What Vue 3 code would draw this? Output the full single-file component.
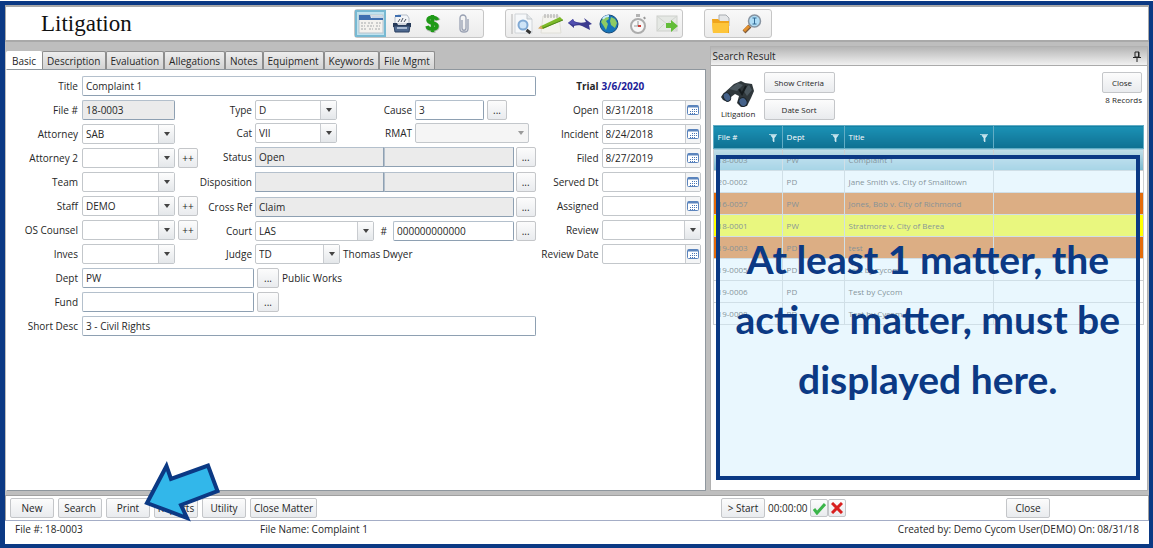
<script setup>
import { ref } from 'vue'

const tabs = ['Basic', 'Description', 'Evaluation', 'Allegations', 'Notes', 'Equipment', 'Keywords', 'File Mgmt']
const activeTab = ref('Basic')

const staff = [
  { id: 'attorney', label: 'Attorney', value: 'SAB' },
  { id: 'attorney2', label: 'Attorney 2', value: '', more: true },
  { id: 'team', label: 'Team', value: '' },
  { id: 'staff', label: 'Staff', value: 'DEMO', more: true },
  { id: 'counsel', label: 'OS Counsel', value: '', more: true },
  { id: 'inves', label: 'Inves', value: '' },
]

const dates = [
  { id: 'open', label: 'Open', value: '8/31/2018' },
  { id: 'incident', label: 'Incident', value: '8/24/2018' },
  { id: 'filed', label: 'Filed', value: '8/27/2019' },
  { id: 'served', label: 'Served Dt', value: '' },
  { id: 'assigned', label: 'Assigned', value: '' },
  { id: 'review', label: 'Review', value: '', list: true },
  { id: 'reviewdate', label: 'Review Date', value: '' },
]

const matters = [
  { file: '18-0003', dept: 'PW', title: 'Complaint 1', tone: 'selected' },
  { file: '20-0002', dept: 'PD', title: 'Jane Smith vs. City of Smalltown', tone: '' },
  { file: '16-0057', dept: 'PW', title: 'Jones, Bob v. City of Richmond', tone: 'orange' },
  { file: '18-0001', dept: 'PW', title: 'Stratmore v. City of Berea', tone: 'yellow' },
  { file: '19-0003', dept: 'PD', title: 'test', tone: 'orange' },
  { file: '19-0005', dept: 'PD', title: 'test by cycom', tone: '' },
  { file: '19-0006', dept: 'PD', title: 'Test by Cycom', tone: '' },
  { file: '19-0008', dept: 'PD', title: 'Test by Cycom', tone: '' },
]
</script>

<template>
  <div class="window">
    <header class="top">
      <h1>Litigation</h1>
      <div class="tools">
        <button class="tool on" aria-label="Matter form">
          <svg width="26" height="20" viewBox="0 0 26 20">
            <rect x="1" y="1" width="24" height="18" fill="#f4f2ee" stroke="#b9c3cc" />
            <path d="M1 1h11l1 3h12v2H1z" fill="#3f6fb0" />
            <path d="M13 2h12v2H14z" fill="#c7d6e8" />
            <path d="M3 9h5M10 9h6M18 9h5M3 12h4M9 12h7M18 12h4M3 15h6M11 15h4M17 15h6" stroke="#a5a8aa" stroke-dasharray="2 1" />
          </svg>
        </button>
        <button class="tool" aria-label="Card file">
          <svg width="20" height="20" viewBox="0 0 20 20">
            <path d="M3 10V3l3-2h9l2 3v6z" fill="#f2f4f7" stroke="#b4bcc8" />
            <path d="M3 2h6" stroke="#3f6fb0" stroke-width="2" />
            <path d="M6 8l2-3M9 8l2-4M12 8l2-3" stroke="#4b5361" />
            <path d="M1 9h4l1 2h8l1-2h4v4H1z" fill="#263a59" />
            <path d="M2 12h16l-1 6H3z" fill="#4d688f" stroke="#2c4161" />
            <path d="M5 14h10" stroke="#a9bbd3" stroke-width="2" />
          </svg>
        </button>
        <button class="tool" aria-label="Finance">
          <svg width="18" height="20" viewBox="0 0 18 20">
            <path d="M14.500 6.500c-1-3-10-4-10 0 0 4 9 2 9 6 0 4-9 4-10 1M9.500 2v17" fill="none" stroke="#b5bbb5" stroke-width="4" />
            <path d="M13.500 6c-1-3-9.500-4-9.500 0 0 4 9 2 9 6 0 4-9 4-10 0M8.500 1v17" fill="none" stroke="#1f9a17" stroke-width="3.500" />
          </svg>
        </button>
        <button class="tool" aria-label="Attachments">
          <svg width="12" height="20" viewBox="0 0 12 20">
            <path d="M4 6v8c0 3 4 3 4 0V4c0-4-6-4-6 0v11c0 4 8 4 8 0V5" fill="none" stroke="#98a0b2" stroke-width="1.300" />
          </svg>
        </button>
      </div>
      <div class="tools wide">
        <button class="tool" aria-label="Document search">
          <svg width="22" height="22" viewBox="0 0 22 22">
            <path d="M1 1v20" stroke="#b4b4b4" />
            <path d="M4 1h12l5 5v14H4z" fill="#f6f8fa" stroke="#d0d4d8" />
            <path d="M16 1v5h5" fill="#e3e7ea" stroke="#c1c6ca" />
            <circle cx="12" cy="12" r="4.500" fill="#cfe4f7" stroke="#80a9d4" stroke-width="2" />
            <path d="M15.500 17l4 3" stroke="#333" stroke-width="3" />
          </svg>
        </button>
        <button class="tool" aria-label="Notepad">
          <svg width="26" height="22" viewBox="0 0 26 22">
            <path d="M5 3h16l2 17H3z" fill="#f4f3ee" stroke="#e0dfd8" />
            <path d="M7 1v4M10 1v4M13 1v4M16 1v4M19 1v4" stroke="#a5a5a5" />
            <path d="M3 13L22 4l3 3L5 16l-4-1z" fill="#7db928" />
            <path d="M4 15.500L25 7" stroke="#4f8717" />
            <path d="M0 15.500l3-3 2 3.500z" fill="#d9a866" />
          </svg>
        </button>
        <button class="tool" aria-label="Routing">
          <svg width="26" height="16" viewBox="0 0 26 16">
            <path d="M1 7l5-4 1 2c4 2 8 2 12 1l-2-4 8 6-3 1 1 5-6-3c-3-2-7-2-10-1v2z" fill="#3b3a8f" />
            <path d="M1 7l5-4 1 3 5 1-5 2z" fill="#514fb0" />
          </svg>
        </button>
        <button class="tool" aria-label="Web">
          <svg width="20" height="20" viewBox="0 0 20 20">
            <circle cx="10" cy="10" r="9" fill="#1673b8" stroke="#174a78" />
            <path d="M4 4l5-2 1 3-3 2 2 3-2 6-3-5-2-3zM12 3l4 2 2 4-2 5-4-3-1-4z" fill="#8ecb63" />
            <path d="M4 5c1-2 4-3 6-3" stroke="#c8edff" stroke-width="2" fill="none" />
          </svg>
        </button>
        <button class="tool" aria-label="Timer">
          <svg width="18" height="22" viewBox="0 0 18 22">
            <path d="M7 1h4v3H7z" fill="#b3b3b3" />
            <path d="M15 4l1 2" stroke="#999" stroke-width="2" />
            <circle cx="9" cy="13" r="7" fill="#f7f7f7" stroke="#acacac" stroke-width="2" />
            <path d="M9 13V8M5 13h4" stroke="#999" />
            <path d="M9 13h3" stroke="#cf3b33" stroke-width="2" />
          </svg>
        </button>
        <button class="tool" aria-label="Send mail">
          <svg width="22" height="18" viewBox="0 0 22 18">
            <rect x="1" y="1" width="20" height="15" fill="#e5e8e4" stroke="#cdd0cc" />
            <path d="M1 1l10 8L21 1M1 16l7-7M21 16l-6-7" fill="none" stroke="#d0d3cf" />
            <path d="M10 8h5V5l7 6-7 6v-4h-5z" fill="#62bd38" />
          </svg>
        </button>
      </div>
      <div class="tools">
        <button class="tool" aria-label="Folder">
          <svg width="20" height="20" viewBox="0 0 20 20">
            <path d="M8 1h7l3 3v8H8z" fill="#e4e6e8" stroke="#a8acb0" />
            <path d="M1 5h6l2 2h9v12H2z" fill="#f0a51c" />
            <path d="M1 9h17l-1 10H2z" fill="#fdc53a" />
          </svg>
        </button>
        <button class="tool" aria-label="Find">
          <svg width="20" height="20" viewBox="0 0 20 20">
            <path d="M8 12l-6 6" stroke="#7c5a3c" stroke-width="4" />
            <path d="M7 12l-5 5" stroke="#e2902f" stroke-width="3" />
            <circle cx="12.500" cy="7" r="6" fill="#aedcf5" stroke="#8793a0" stroke-width="1.500" />
            <path d="M10.500 4h4M12.500 4v6M10.500 10h4" stroke="#336a94" />
          </svg>
        </button>
      </div>
    </header>

    <main class="body">
      <section class="matter">
        <nav class="tabs" role="tablist">
          <button v-for="t in tabs" :key="t" role="tab" :class="{ active: t === activeTab }" :aria-selected="t === activeTab" @click="activeTab = t">{{ t }}</button>
        </nav>
        <div class="form">
          <div class="main">
            <div class="field"><label for="title">Title</label><input id="title" class="box grow" value="Complaint 1" /></div>
            <div class="split">
              <div class="left">
                <div class="field"><label for="file">File #</label><input id="file" class="box std" value="18-0003" readonly /></div>
                <div v-for="f in staff" :key="f.id" class="field">
                  <label :for="f.id">{{ f.label }}</label>
                  <span class="combo std"><select :id="f.id"><option>{{ f.value }}</option></select></span>
                  <button v-if="f.more" class="btn plus" :aria-label="'More ' + f.label">++</button>
                </div>
              </div>
              <div class="middle">
                <div class="field">
                  <label for="type">Type</label>
                  <span class="combo short"><select id="type"><option>D</option></select></span>
                  <label class="second" for="cause">Cause</label>
                  <input id="cause" class="box cause" value="3" />
                  <button class="btn dots" aria-label="Choose cause">...</button>
                </div>
                <div class="field">
                  <label for="cat">Cat</label>
                  <span class="combo short"><select id="cat"><option>VII</option></select></span>
                  <label class="second" for="rmat">RMAT</label>
                  <span class="combo off"><select id="rmat" disabled><option></option></select></span>
                </div>
                <div class="field tall">
                  <label for="status">Status</label>
                  <span class="pair"><input id="status" class="box" value="Open" readonly /><input class="box" aria-label="Status detail" readonly /></span>
                  <button class="btn dots" aria-label="Choose status">...</button>
                </div>
                <div class="field tall">
                  <label for="disposition">Disposition</label>
                  <span class="pair"><input id="disposition" class="box" readonly /><input class="box" aria-label="Disposition detail" readonly /></span>
                  <button class="btn dots" aria-label="Choose disposition">...</button>
                </div>
                <div class="field tall">
                  <label for="crossref">Cross Ref</label>
                  <input id="crossref" class="box grow" value="Claim" readonly />
                  <button class="btn dots" aria-label="Choose cross reference">...</button>
                </div>
                <div class="field">
                  <label for="court">Court</label>
                  <span class="combo court"><select id="court"><option>LAS</option></select></span>
                  <label class="hash" for="courtno">#</label>
                  <input id="courtno" class="box grow" value="000000000000" />
                  <button class="btn dots" aria-label="Choose court number">...</button>
                </div>
                <div class="field">
                  <label for="judge">Judge</label>
                  <span class="combo judge"><select id="judge"><option>TD</option></select></span>
                  <span class="note">Thomas Dwyer</span>
                </div>
              </div>
            </div>
            <div class="field"><label for="dept">Dept</label><input id="dept" class="box long" value="PW" /><button class="btn dots" aria-label="Choose department">...</button><span class="note">Public Works</span></div>
            <div class="field"><label for="fund">Fund</label><input id="fund" class="box long" /><button class="btn dots" aria-label="Choose fund">...</button></div>
            <div class="field"><label for="desc">Short Desc</label><input id="desc" class="box grow" value="3 - Civil Rights" /></div>
          </div>
          <div class="dates">
            <div class="field trial"><span class="name">Trial</span><span class="when">3/6/2020</span></div>
            <div v-for="d in dates" :key="d.id" class="field">
              <label :for="d.id">{{ d.label }}</label>
              <span v-if="d.list" class="combo grow"><select :id="d.id"><option></option></select></span>
              <span v-else class="date">
                <input :id="d.id" :value="d.value" />
                <button :aria-label="'Pick ' + d.label">
                  <svg width="12" height="12" viewBox="0 0 12 12">
                    <rect x=".5" y="1.500" width="11" height="9" rx="1" fill="#fff" stroke="#5b84bd" />
                    <path d="M1 2.500h10" stroke="#5b84bd" stroke-width="2" />
                    <path d="M5 5.500h1M7 5.500h1M9 5.500h1M3 7.500h1M5 7.500h1M7 7.500h1M9 7.500h1M3 9.500h1M5 9.500h1M7 9.500h1" stroke="#4b77b5" />
                  </svg>
                </button>
              </span>
            </div>
          </div>
        </div>
      </section>

      <aside class="results">
        <div class="caption">
          <h2>Search Result</h2>
          <svg width="8" height="11" viewBox="0 0 8 11"><path d="M2 1h4v5H2zM0 6.500h8M4 7v4M5.500 1v5" fill="none" stroke="#222" /></svg>
        </div>
        <div class="actions">
          <div class="kind">
            <svg width="34" height="28" viewBox="0 0 34 28">
              <path d="M2 14L13 4l7-3 4 2 7 1 2 7-3 7-4 8-6 1-4-4 2-7-4-2-4 3-3 5-5-2-2-3z" fill="#2f373b" />
              <path d="M8 9l9-6 5 2-6 6zM22 10l6-5 3 5-5 6z" fill="#4b575e" />
              <path d="M18 9l3 5 4-8" fill="none" stroke="#151b1e" stroke-width="2" />
              <ellipse cx="6" cy="17" rx="3.500" ry="4.500" fill="#45628a" stroke="#1c2328" transform="rotate(-30 6 17)" />
              <ellipse cx="22" cy="22" rx="4" ry="4.500" fill="#45628a" stroke="#1c2328" transform="rotate(-30 22 22)" />
            </svg>
            <span>Litigation</span>
          </div>
          <div class="stack">
            <button class="btn">Show Criteria</button>
            <button class="btn">Date Sort</button>
          </div>
          <div class="end">
            <button class="btn">Close</button>
            <span>8 Records</span>
          </div>
        </div>
        <table>
          <colgroup><col class="c1" /><col class="c2" /><col class="c3" /><col /></colgroup>
          <thead>
            <tr>
              <th v-for="h in ['File #', 'Dept', 'Title']" :key="h">
                <span class="head">{{ h }}<svg width="9" height="9" viewBox="0 0 9 9"><path d="M0 1.500h8M2 2.500h5L5 5v4L4 8V5z" fill="#c9e6ef" stroke="#d9eef4" stroke-width=".7" /></svg></span>
              </th>
              <th></th>
            </tr>
          </thead>
          <tbody>
            <tr v-for="m in matters" :key="m.file" :class="m.tone">
              <td>{{ m.file }}</td><td>{{ m.dept }}</td><td>{{ m.title }}</td><td></td>
            </tr>
          </tbody>
        </table>
        <div class="callout">At least 1 matter, the active matter, must be displayed here.</div>
      </aside>
    </main>

    <footer class="bar">
      <div class="commands">
        <button class="btn">New</button>
        <button class="btn">Search</button>
        <button class="btn">Print</button>
        <button class="btn">Reports</button>
        <button class="btn">Utility</button>
        <button class="btn wide">Close Matter</button>
        <svg class="pointer" width="80" height="66" viewBox="142 458 80 66">
          <path d="M147 503L166.500 466L171 479L208 465.500L217.500 491L181 505L187 518Z" fill="#32b7ea" stroke="#0b3984" stroke-width="4" />
        </svg>
      </div>
      <div class="session">
        <button class="btn">&gt; Start</button>
        <span class="clock">00:00:00</span>
        <button class="btn mini" aria-label="Accept"><svg width="13" height="13" viewBox="0 0 13 13"><path d="M1 7l3 4 8-9" fill="none" stroke="#3cb54a" stroke-width="3" /></svg></button>
        <button class="btn mini" aria-label="Cancel"><svg width="12" height="12" viewBox="0 0 12 12"><path d="M1 1l10 10M11 1L1 11" stroke="#d8201f" stroke-width="3" /></svg></button>
        <button class="btn shut">Close</button>
      </div>
    </footer>
    <div class="state">
      <span class="fileno">File #: 18-0003</span>
      <span>File Name: Complaint 1</span>
      <span class="created">Created by: Demo Cycom User(DEMO) On: 08/31/18</span>
    </div>
  </div>
</template>

<style>
body { margin: 0; background: #fff; }
</style>

<style scoped>
* { box-sizing: border-box; }
.window {
  --navy: #0b3984;
  display: flex;
  flex-direction: column;
  min-height: calc(100vh - 1px);
  margin-top: 1px;
  border: 4px solid var(--navy);
  border-left-width: 5px;
  background: #bebebe;
  color: #262626;
  font: 10px/14px "Open Sans", "Noto Sans", sans-serif;
}
button, input, select { font: inherit; color: inherit; }
button { padding: 0; }
h1, h2 { margin: 0; font-weight: 400; }

.top {
  display: flex;
  align-items: center;
  height: 37px;
  border: 1px solid #a9a9a9;
  border-width: 2px 1px;
  background: #fff;
}
h1 { width: 348px; padding-left: 35px; font: 23px/32px "Liberation Serif", serif; color: #111; }
.tools {
  display: flex;
  height: 29px;
  margin-right: 21px;
  padding-right: 4px;
  border: 1px solid #c6c6c6;
  border-radius: 3px;
  background: linear-gradient(#f9f9f9, #ebebeb);
}
.tool {
  display: grid;
  place-items: center;
  width: 31px;
  border: 0;
  background: none;
}
.tool.on { border: 2px solid #78b9d2; background: #bfe2ef; }
.tools.wide .tool { width: 29px; }
.tools.wide { padding: 0 1px; }

.body { flex: 1; display: grid; grid-template-columns: minmax(0, 699fr) minmax(0, 438fr); column-gap: 4px; padding: 4px 1px 4px; }
.matter { display: flex; flex-direction: column; padding-top: 5px; }
.tabs { display: flex; }
.tabs button {
  height: 18px;
  padding: 0 4px;
  border: 1px solid #8d8d8d;
  border-bottom: 0;
  border-radius: 2px 2px 0 0;
  background: linear-gradient(#ededed, #d2d2d2);
  line-height: 16px;
}
.tabs .active { padding: 0 5px; background: #fff; border-color: #fff; }
.form {
  flex: 1;
  display: flex;
  padding: 6px 4px 0 0;
  border: 1px solid #8f979e;
  border-left-color: #fff;
  background: #fff;
}
.main { flex: 1; min-width: 0; display: flex; flex-direction: column; gap: 4px; }
.split { display: flex; }
.left, .middle, .dates { display: flex; flex-direction: column; gap: 4px; }
.left { width: 191px; }
.middle { flex: 1; min-width: 0; gap: 3px; }
.field { display: flex; align-items: center; height: 20px; white-space: nowrap; }
.field.tall { height: 22px; }
.field > label, .name { width: 71px; margin-right: 4px; text-align: right; }
.middle .field > label { width: 54px; margin-right: 3px; display: flex; justify-content: flex-end; }
.middle .field > .second { width: 75px; }
.middle .field > .hash { width: 13px; margin-right: 6px; }
.box, .date, .combo { height: 20px; border: 1px solid #c3c7cb; border-radius: 2px; background: #fff; min-width: 0; }
.box { padding: 0 3px; border-color: #b4c0cc #8ea0b2 #8ea0b2 #b4c0cc; }
.box[readonly] { background: #ebebeb; }
.grow { flex: 1; width: 0; }
.std { width: 93px; }
.short { width: 82px; }
.cause { width: 69px; }
.court { width: 119px; }
.judge { width: 85px; }
.long { width: 172px; }
.pair { flex: 1; display: flex; min-width: 0; }
.pair .box { flex: 1; width: 0; border-radius: 0; }
.combo { position: relative; display: flex; }
.combo select { width: 100%; height: 100%; padding: 0 18px 0 3px; border: 0; background: transparent; appearance: none; outline: 0; }
.combo::before {
  content: "";
  position: absolute;
  inset: 0 0 0 auto;
  width: 15px;
  border-left: 1px solid #c9ccd0;
  background: linear-gradient(#fdfdfd, #e4e7ea);
  pointer-events: none;
}
.combo::after {
  content: "";
  position: absolute;
  top: 7px;
  right: 4px;
  border: 3px solid transparent;
  border-top: 4px solid #444;
  border-bottom: 0;
  pointer-events: none;
}
.combo.off { width: 114px; background: #f5f5f5; }
.combo.off::before { display: none; }
.combo.off::after { border-top-color: #9a9a9a; }
.btn {
  height: 20px;
  border: 1px solid #c4c6c9;
  border-radius: 2px;
  background: linear-gradient(#fcfcfc, #e9ebee);
  white-space: nowrap;
}
.dots { width: 20px; margin-left: 2px; line-height: 14px; }
.cause + .dots { margin-left: 3px; }
.long + .dots { width: 22px; margin-left: 3px; }
.plus { width: 20px; margin-left: 3px; }
.note { margin-left: 3px; }
.dates { width: 165px; }
.dates .field > label, .name { width: 63px; margin-right: 3px; }
.trial { font-weight: 700; }
.when { color: #1c1c98; }
.date { flex: 1; display: flex; }
.date input { flex: 1; min-width: 0; padding: 0 3px; border: 0; background: none; }
.date button { display: grid; place-items: center; width: 15px; border: 0; border-left: 1px solid #c9ccd0; background: #f4f5f6; }

.results { position: relative; border: 1px solid #b1b1b1; background: #fff; font-size: 8px; line-height: 12px; }
.caption {
  display: flex;
  align-items: center;
  justify-content: space-between;
  height: 19px;
  padding: 0 6px 0 2px;
  border-bottom: 1px solid #aaa;
  background: linear-gradient(#b5b5b5, #f1f1f1);
}
h2 { font-size: 10px; }
.actions { display: flex; align-items: flex-start; padding: 6px 5px 5px 2px; }
.kind { display: flex; flex-direction: column; align-items: center; width: 51px; padding-top: 8px; }
.stack { display: grid; gap: 6px; width: 71px; }
.actions .btn { height: 21px; }
.end { display: flex; flex-direction: column; align-items: flex-end; gap: 1px; margin-left: auto; }
.end .btn { width: 40px; }
table { width: calc(100% - 5px); margin: 0 3px 0 2px; border-collapse: collapse; table-layout: fixed; }
.c1 { width: 69px; }
.c2 { width: 62px; }
.c3 { width: 149px; }
th { height: 23px; padding: 0 4px; border: 1px solid #62adc5; background: linear-gradient(#1b92b6, #0f7091); color: #fff; font-weight: 400; text-align: left; }
.head { display: flex; justify-content: space-between; align-items: center; }
td { height: 22px; padding: 0 4px; border: 1px solid #cdcfd1; color: #333; white-space: nowrap; }
.selected td { background: linear-gradient(#c3dfe9, #79b8ce); }
.orange td { background: #e46c0a; }
.yellow td { background: #ff0; }
.callout {
  position: absolute;
  inset: 108px 7px 10px 5px;
  padding-top: 70px;
  border: 4px solid var(--navy);
  background: rgba(212, 239, 254, 0.5);
  color: var(--navy);
  font: 700 39px/60px Lato, sans-serif;
  text-align: center;
}

.bar { display: grid; grid-template-columns: minmax(0, 715fr) minmax(0, 427fr); height: 26px; border: 1px solid #a0a0a0; border-bottom-color: #a4adc6; background: #fff; }
.bar .btn { width: 44px; height: 20px; }
.bar .btn.wide { width: 67px; }
.bar .btn.mini { display: grid; place-items: center; width: 18px; height: 18px; }
.commands { position: relative; display: flex; align-items: center; gap: 4px; padding-left: 4px; }
.pointer { position: absolute; left: 136px; bottom: -4px; pointer-events: none; }
.session { display: flex; align-items: center; }
.clock { width: 42px; margin-left: 3px; }
.bar .shut { margin: 0 98px 0 auto; }
.state { display: flex; height: 23px; padding: 1px 10px 0 10px; background: #fff; }
.fileno { width: 245px; }
.created { margin-left: auto; }
</style>
